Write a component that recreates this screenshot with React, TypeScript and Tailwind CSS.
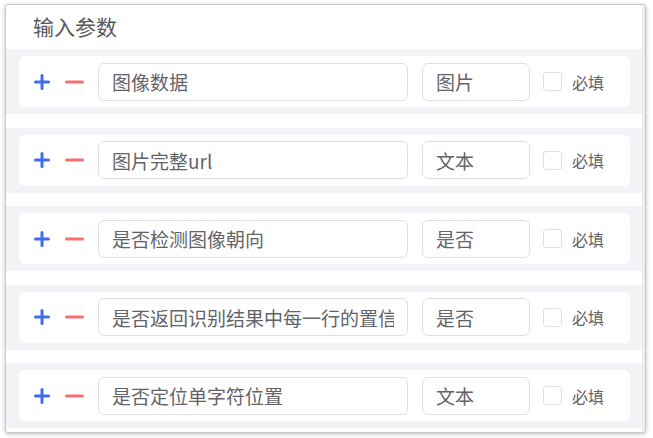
import React from "react";

const params = [
  { name: "图像数据", type: "图片" },
  { name: "图片完整url", type: "文本" },
  { name: "是否检测图像朝向", type: "是否" },
  { name: "是否返回识别结果中每一行的置信度", type: "是否" },
  { name: "是否定位单字符位置", type: "文本" },
];

const font = { fontFamily: '"Noto Sans CJK SC", "Noto Sans", sans-serif' };

function PlusIcon() {
  return (
    <svg width="16" height="16" viewBox="0 0 16 16" className="shrink-0">
      <path d="M8 1.5v13M1.5 8h13" stroke="#3f6cf0" strokeWidth="3" strokeLinecap="round" />
    </svg>
  );
}

function MinusIcon() {
  return (
    <svg width="19" height="16" viewBox="0 0 19 16" className="shrink-0">
      <path d="M1.5 8h16" stroke="#f76f6f" strokeWidth="3" strokeLinecap="round" />
    </svg>
  );
}

function ParamRow({ name, type }: { name: string; type: string }) {
  return (
    <div className="bg-[#f2f3f7] pl-[13px] pr-[12px] py-[7px]">
      <div className="h-[51px] bg-white rounded-[6px] flex items-center pl-[15px]">
        <PlusIcon />
        <span className="w-[15px]" />
        <MinusIcon />
        <input
          readOnly
          value={name}
          className="ml-[14px] w-[310px] h-[38px] border border-[#dcdfe6] rounded-[6px] pl-[13px] pr-[13px] text-[19px] text-[#636469] outline-none bg-white"
          style={font}
        />
        <input
          readOnly
          value={type}
          className="ml-[14px] w-[108px] h-[38px] border border-[#dcdfe6] rounded-[6px] pl-[13px] text-[19px] text-[#636469] outline-none bg-white"
          style={font}
        />
        <span className="ml-[13px] w-[19px] h-[19px] border border-[#dcdfe6] rounded-[3px] bg-white shrink-0" />
        <span className="ml-[10px] text-[16px] text-[#636469]" style={font}>
          必填
        </span>
      </div>
    </div>
  );
}

export default function App() {
  return (
    <div className="w-[653px] h-[438px] bg-white pt-[4px] pl-[5px]">
      <div className="relative w-[641px] h-[429px] border border-[#c9c9c9] rounded-[3px] shadow-[0_1px_4px_rgba(0,0,0,0.25)] bg-white overflow-hidden">
        <div className="absolute right-0 top-0 bottom-0 w-[3px] bg-[#ededed]" />
        <div className="mr-[3px]">
          <div className="h-[44px] flex items-center pl-[27px]">
            <span className="text-[21px] text-[#58595c]" style={font}>
              输入参数
            </span>
          </div>
          <div className="flex flex-col gap-[13.5px]">
            {params.map((p) => (
              <ParamRow key={p.name} name={p.name} type={p.type} />
            ))}
          </div>
        </div>
      </div>
    </div>
  );
}
